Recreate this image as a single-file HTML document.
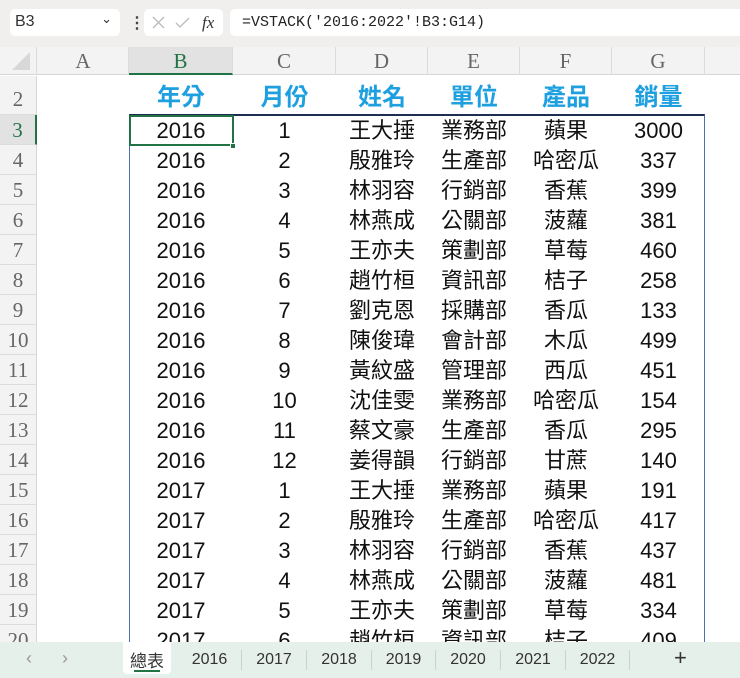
<!DOCTYPE html>
<html><head><meta charset="utf-8"><style>
*{margin:0;padding:0;box-sizing:border-box}
body{width:740px;height:678px;overflow:hidden;background:#fff;position:relative;font-family:"Liberation Sans","Noto Sans CJK TC",sans-serif}
.top{position:absolute;left:0;top:0;width:740px;height:47px;background:#f0efee}
.box{position:absolute;background:#fff;border-radius:5px;top:9px;height:27px}
.colh{position:absolute;top:47px;height:28px;background:#f3f3f3;border-bottom:1px solid #d6d6d6;width:740px;left:0}
.ch{position:absolute;top:0;height:28px;line-height:28px;text-align:center;font-family:"Liberation Serif",serif;font-size:21px;color:#666;border-right:1px solid #dcdcdc}
.rh{position:absolute;left:0;width:37px;text-align:center;font-family:"Liberation Serif",serif;font-size:21px;color:#666;background:#f3f3f3;border-bottom:1px solid #dcdcdc;border-right:1px solid #d6d6d6}
.row{position:absolute;left:129px;height:30px;display:flex;font-size:22px;color:#111;line-height:31px}
.row div{text-align:center}
.c1{width:104px}.c2{width:103px}.c3{width:92px}.c4{width:92px}.c5{width:92px}.c6{width:93px}
.hd{color:#1ea0e0;font-weight:bold;font-size:24px;line-height:42px;height:40px}
.tabs{position:absolute;left:0;top:642px;width:740px;height:36px;background:#e6f0eb;font-size:16px;color:#333}
.tab{position:absolute;top:8px;height:20px;line-height:20px;text-align:center;border-right:1px solid #c9d3cd}
</style></head><body>
<div class="top">
<div class="box" style="left:10px;width:110px;font-size:16px;color:#333;padding:4px 5px">B3<span style="position:absolute;right:8px;top:2px;font-size:13px">&#8964;</span></div>
<div style="position:absolute;left:129px;top:13px;font-size:16px;color:#444;font-weight:bold">&#8942;</div>
<div class="box" style="left:144px;width:79px">
<svg width="79" height="27"><path d="M9 8l11 11M20 8L9 19" stroke="#bbb" stroke-width="1.3"/><path d="M32 14l4 4 9-9" stroke="#bbb" stroke-width="1.3" fill="none"/><text x="58" y="19" font-family="Liberation Serif" font-style="italic" font-size="17" fill="#333">fx</text></svg></div>
<div class="box" style="left:230px;width:520px;font-family:'Liberation Mono',monospace;font-size:15px;color:#222;padding:5px 12px">=VSTACK('2016:2022'!B3:G14)</div>
</div>
<div class="colh">
<div style="position:absolute;left:0;top:0;width:37px;height:28px;border-right:1px solid #dcdcdc"><svg width="37" height="28"><path d="M30 5L30 23L12 23Z" fill="#d8d8d8"/></svg></div>
<div class="ch" style="left:38px;width:91px">A</div>
<div class="ch" style="left:129px;width:104px;background:#e2e2e2;color:#217346;border-bottom:2px solid #217346">B</div>
<div class="ch" style="left:233px;width:103px">C</div>
<div class="ch" style="left:336px;width:92px">D</div>
<div class="ch" style="left:428px;width:92px">E</div>
<div class="ch" style="left:520px;width:92px">F</div>
<div class="ch" style="left:612px;width:93px">G</div>
</div>
<div class="rh" style="top:76px;height:39px;line-height:46px">2</div>
<div class="rh" style="top:115px;height:30px;line-height:30px;background:#e2e2e2;color:#217346;border-right:2px solid #217346">3</div>
<div class="rh" style="top:145px;height:30px;line-height:30px">4</div>
<div class="rh" style="top:175px;height:30px;line-height:30px">5</div>
<div class="rh" style="top:205px;height:30px;line-height:30px">6</div>
<div class="rh" style="top:235px;height:30px;line-height:30px">7</div>
<div class="rh" style="top:265px;height:30px;line-height:30px">8</div>
<div class="rh" style="top:295px;height:30px;line-height:30px">9</div>
<div class="rh" style="top:325px;height:30px;line-height:30px">10</div>
<div class="rh" style="top:355px;height:30px;line-height:30px">11</div>
<div class="rh" style="top:385px;height:30px;line-height:30px">12</div>
<div class="rh" style="top:415px;height:30px;line-height:30px">13</div>
<div class="rh" style="top:445px;height:30px;line-height:30px">14</div>
<div class="rh" style="top:475px;height:30px;line-height:30px">15</div>
<div class="rh" style="top:505px;height:30px;line-height:30px">16</div>
<div class="rh" style="top:535px;height:30px;line-height:30px">17</div>
<div class="rh" style="top:565px;height:30px;line-height:30px">18</div>
<div class="rh" style="top:595px;height:30px;line-height:30px">19</div>
<div class="rh" style="top:625px;height:30px;line-height:30px">20</div>

<div class="row" style="top:77px;height:40px"><div class="c1 hd">年分</div><div class="c2 hd">月份</div><div class="c3 hd">姓名</div><div class="c4 hd">單位</div><div class="c5 hd">產品</div><div class="c6 hd">銷量</div></div>
<div style="position:absolute;left:129px;top:114px;width:576px;height:540px;border:1px solid #4a6fb0;border-top:2px solid #1f2d50"></div>
<div style="position:absolute;left:129px;top:115px;width:105px;height:31px;border:2px solid #217346"></div>
<div style="position:absolute;left:230px;top:143px;width:6px;height:6px;background:#217346;border:1px solid #fff"></div>

<div class="row" style="top:115px"><div class="c1">2016</div><div class="c2">1</div><div class="c3">王大捶</div><div class="c4">業務部</div><div class="c5">蘋果</div><div class="c6">3000</div></div>
<div class="row" style="top:145px"><div class="c1">2016</div><div class="c2">2</div><div class="c3">殷雅玲</div><div class="c4">生產部</div><div class="c5">哈密瓜</div><div class="c6">337</div></div>
<div class="row" style="top:175px"><div class="c1">2016</div><div class="c2">3</div><div class="c3">林羽容</div><div class="c4">行銷部</div><div class="c5">香蕉</div><div class="c6">399</div></div>
<div class="row" style="top:205px"><div class="c1">2016</div><div class="c2">4</div><div class="c3">林燕成</div><div class="c4">公關部</div><div class="c5">菠蘿</div><div class="c6">381</div></div>
<div class="row" style="top:235px"><div class="c1">2016</div><div class="c2">5</div><div class="c3">王亦夫</div><div class="c4">策劃部</div><div class="c5">草莓</div><div class="c6">460</div></div>
<div class="row" style="top:265px"><div class="c1">2016</div><div class="c2">6</div><div class="c3">趙竹桓</div><div class="c4">資訊部</div><div class="c5">桔子</div><div class="c6">258</div></div>
<div class="row" style="top:295px"><div class="c1">2016</div><div class="c2">7</div><div class="c3">劉克恩</div><div class="c4">採購部</div><div class="c5">香瓜</div><div class="c6">133</div></div>
<div class="row" style="top:325px"><div class="c1">2016</div><div class="c2">8</div><div class="c3">陳俊瑋</div><div class="c4">會計部</div><div class="c5">木瓜</div><div class="c6">499</div></div>
<div class="row" style="top:355px"><div class="c1">2016</div><div class="c2">9</div><div class="c3">黃紋盛</div><div class="c4">管理部</div><div class="c5">西瓜</div><div class="c6">451</div></div>
<div class="row" style="top:385px"><div class="c1">2016</div><div class="c2">10</div><div class="c3">沈佳雯</div><div class="c4">業務部</div><div class="c5">哈密瓜</div><div class="c6">154</div></div>
<div class="row" style="top:415px"><div class="c1">2016</div><div class="c2">11</div><div class="c3">蔡文豪</div><div class="c4">生產部</div><div class="c5">香瓜</div><div class="c6">295</div></div>
<div class="row" style="top:445px"><div class="c1">2016</div><div class="c2">12</div><div class="c3">姜得韻</div><div class="c4">行銷部</div><div class="c5">甘蔗</div><div class="c6">140</div></div>
<div class="row" style="top:475px"><div class="c1">2017</div><div class="c2">1</div><div class="c3">王大捶</div><div class="c4">業務部</div><div class="c5">蘋果</div><div class="c6">191</div></div>
<div class="row" style="top:505px"><div class="c1">2017</div><div class="c2">2</div><div class="c3">殷雅玲</div><div class="c4">生產部</div><div class="c5">哈密瓜</div><div class="c6">417</div></div>
<div class="row" style="top:535px"><div class="c1">2017</div><div class="c2">3</div><div class="c3">林羽容</div><div class="c4">行銷部</div><div class="c5">香蕉</div><div class="c6">437</div></div>
<div class="row" style="top:565px"><div class="c1">2017</div><div class="c2">4</div><div class="c3">林燕成</div><div class="c4">公關部</div><div class="c5">菠蘿</div><div class="c6">481</div></div>
<div class="row" style="top:595px"><div class="c1">2017</div><div class="c2">5</div><div class="c3">王亦夫</div><div class="c4">策劃部</div><div class="c5">草莓</div><div class="c6">334</div></div>
<div class="row" style="top:625px"><div class="c1">2017</div><div class="c2">6</div><div class="c3">趙竹桓</div><div class="c4">資訊部</div><div class="c5">桔子</div><div class="c6">409</div></div>

<div class="tabs">
<div style="position:absolute;left:26px;top:6px;color:#999;font-size:18px">&#8249;</div>
<div style="position:absolute;left:62px;top:6px;color:#999;font-size:18px">&#8250;</div>
<div style="position:absolute;left:123px;top:0;width:48px;height:32px;background:#fff;border-radius:0 0 4px 4px"></div>
<div style="position:absolute;left:123px;top:5px;width:48px;text-align:center;font-size:17px">總表</div>
<div style="position:absolute;left:134px;top:28px;width:26px;height:2px;background:#217346"></div>
<div class="tab" style="left:178px;width:64px">2016</div>
<div class="tab" style="left:242px;width:65px">2017</div>
<div class="tab" style="left:307px;width:65px">2018</div>
<div class="tab" style="left:372px;width:64px">2019</div>
<div class="tab" style="left:436px;width:65px">2020</div>
<div class="tab" style="left:501px;width:65px">2021</div>
<div class="tab" style="left:566px;width:64px">2022</div>
<div style="position:absolute;left:674px;top:3px;font-size:22px;color:#333">+</div>
</div>
</body></html>
